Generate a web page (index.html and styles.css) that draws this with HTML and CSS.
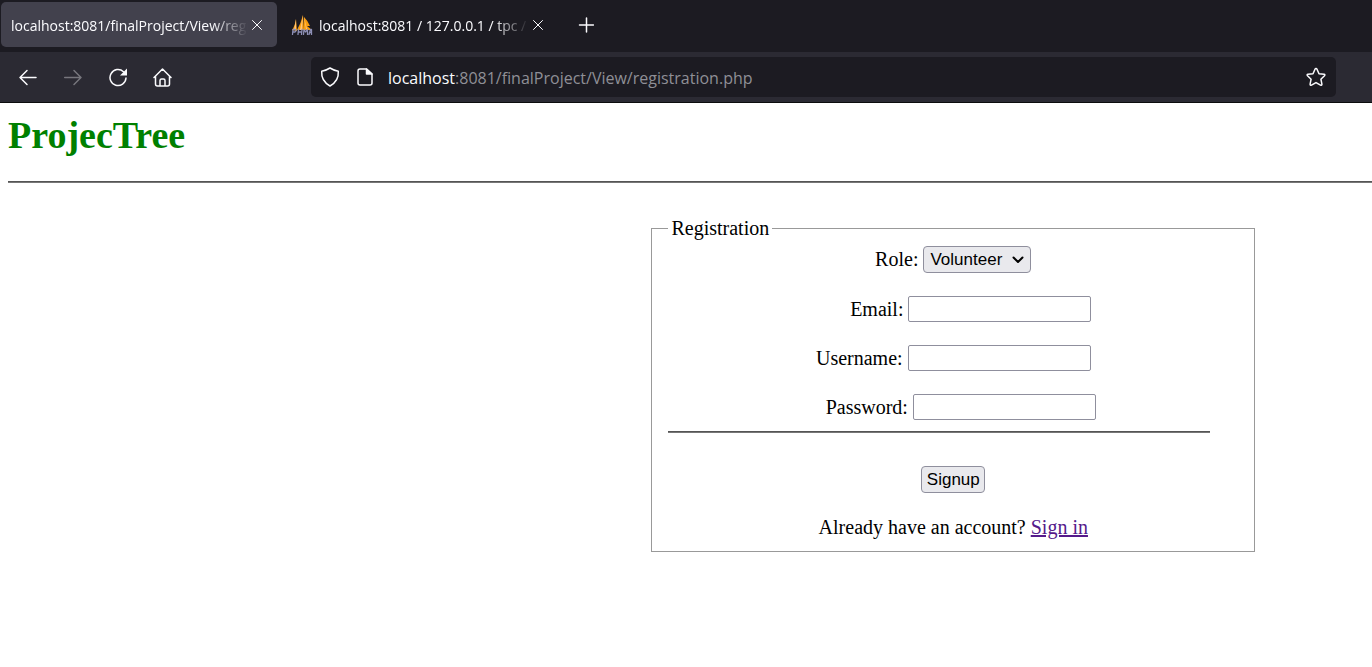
FILE: index.html
```html
<!DOCTYPE html>
<html lang="en">
<head>
<meta charset="utf-8">
<title>ProjecTree</title>
<link rel="stylesheet" href="styles.css">
</head>
<body>
<header class="browser">
  <div class="tabs">
    <div class="tab tab-active">
      <span class="tab-title">localhost:8081/finalProject/View/registration.php</span>
      <button class="icon-button tab-close" type="button" aria-label="Close tab"><svg width="10" height="10" viewBox="0 0 10 10"><path d="M.5.5l9 9m0-9l-9 9"/></svg></button>
    </div>
    <div class="tab">
      <svg class="favicon" width="22" height="20" viewBox="0 0 22 20">
        <path fill="#f89c0e" stroke="none" d="M1 15Q4 11 5 4l1 12zM6 15Q10 8 12 0l1 15zM13 15V2q4 4 6 9h-3l5 4z"/>
        <path fill="#ffc579" stroke="none" d="M5 4L3 15h2zM12 0L9 15h2zM13 2l2 12h1z"/>
        <path stroke="#8d8fb5" stroke-width="1.300" d="M1.500 19.500l.5-5h2.500q1 1.500-.5 2.500H2M7 19.500l.5-5m-.2 2.500h3.200m.5-2.500l-.5 5M12.500 19.500l.5-5 1.500 2.500 2-2.500v5M18 19.500l1.500-5h1v5m-2-2h2"/>
      </svg>
      <span class="tab-title">localhost:8081 / 127.0.0.1 / tpc / users</span>
      <button class="icon-button tab-close" type="button" aria-label="Close tab"><svg width="10" height="10" viewBox="0 0 10 10"><path d="M.5.5l9 9m0-9l-9 9"/></svg></button>
    </div>
    <button class="icon-button new-tab" type="button" aria-label="New tab"><svg width="16" height="16" viewBox="0 0 16 16"><path d="M8.500 1v14M1.500 8h14"/></svg></button>
  </div>
  <div class="toolbar">
    <nav class="nav">
      <button class="icon-button" type="button" aria-label="Back"><svg width="20" height="20" viewBox="0 0 20 20"><path d="M18 10.500H2m7-7l-7 7 7 7"/></svg></button>
      <button class="icon-button" type="button" aria-label="Forward" disabled><svg width="20" height="20" viewBox="0 0 20 20"><path d="M1.700 10.500H18m-7-7l7 7-7 7"/></svg></button>
      <button class="icon-button" type="button" aria-label="Reload"><svg width="20" height="20" viewBox="0 0 20 20"><path d="M15.500 4.700A8 8 0 1 0 18 11"/><path fill="currentColor" stroke="none" d="M19 1.500v7h-7z"/></svg></button>
      <button class="icon-button" type="button" aria-label="Home"><svg width="20" height="20" viewBox="0 0 20 20"><path d="M1 10.500L9.500 2l8.500 8.500M2.500 9.500V17q0 2 2 2h10q2 0 2-2V9.500M7 19v-5.500q0-1.500 1.500-1.500h2q1.500 0 1.500 1.500V19"/></svg></button>
    </nav>
    <div class="address">
      <button class="icon-button" type="button" aria-label="Tracking protection"><svg width="20" height="20" viewBox="0 0 20 20"><path d="M10 1q4 2.500 8.300 3.300Q19 14 10 19 1 14 1.700 4.300 6 3.500 10 1z"/></svg></button>
      <button class="icon-button" type="button" aria-label="Site information"><svg width="20" height="20" viewBox="0 0 20 20"><path d="M12.500 2H6Q4 2 4 4v12q0 2 2 2h10q2 0 2-2V7z"/><path fill="currentColor" d="M12.500 2v5H18z"/></svg></button>
      <div class="url" role="textbox" aria-label="Address"><span class="host">localhost</span>:8081/finalProject/View/registration.php</div>
      <button class="icon-button" type="button" aria-label="Bookmark"><svg width="20" height="20" viewBox="0 0 20 20"><path d="M10 1.500q.7 0 1 .7l2 4.500 5 .6q1.500.3.500 1.500l-3.600 3.400 1 5q0 1.500-1.400.9L10 15.600l-4.500 2.500q-1.400.6-1.400-.9l1-5L1.500 8.800q-1-1.200.5-1.500l5-.6 2-4.500q.3-.7 1-.7z"/></svg></button>
    </div>
  </div>
</header>
<main class="page">
  <h1 class="brand">ProjecTree</h1>
  <hr class="rule">
  <form>
    <fieldset class="registration">
      <legend>Registration</legend>
      <div class="row">
        <label for="role">Role:</label>
        <span class="select-wrap">
          <select class="control select" id="role"><option>Volunteer</option></select>
          <svg class="chevron" width="12" height="8" viewBox="0 0 12 8"><path d="M1.500 1.500L6 6l4.500-4.500"/></svg>
        </span>
      </div>
      <div class="row row-email"><label for="email">Email:</label><input class="control text" id="email" type="email"></div>
      <div class="row"><label for="username">Username:</label><input class="control text" id="username" type="text"></div>
      <div class="row row-password"><label for="password">Password:</label><input class="control text" id="password" type="password"></div>
      <hr class="rule form-rule">
      <div class="row"><button class="control signup" type="submit">Signup</button></div>
      <p class="row">Already have an account? <a class="signin" href="#signin">Sign in</a></p>
    </fieldset>
  </form>
</main>
</body>
</html>
```

FILE: styles.css
```css
* {
  box-sizing: border-box;
}

body {
  margin: 0;
  background: #fff;
  color: #000;
  font: 20px/23px "Liberation Serif", "Times New Roman", serif;
}

svg {
  display: block;
  fill: none;
  stroke: currentColor;
  stroke-width: 1.5;
  stroke-linecap: round;
  stroke-linejoin: round;
}

.browser {
  background: #2b2a33;
  border-bottom: 1px solid #0c0c0d;
  color: #fbfbfe;
  font-family: "Open Sans", "Noto Sans", sans-serif;
}

.tabs {
  display: flex;
  align-items: center;
  height: 52px;
  padding: 0 1px 3px;
  background: #1c1b22;
}

.tab {
  display: flex;
  align-items: center;
  width: 276px;
  height: 45px;
  padding: 0 15px 0 10px;
  border-radius: 5px;
  font-size: 14px;
}

.tab-active {
  background: #42414d;
}

.tab + .tab {
  width: 281px;
  padding-left: 14px;
}

.favicon {
  flex: none;
  margin-right: 6px;
}

.tab-title {
  flex: 1;
  padding-top: 2px;
  overflow: hidden;
  white-space: nowrap;
  mask-image: linear-gradient(to left, transparent, #000 36px);
}

.icon-button {
  flex: none;
  padding: 0;
  border: 0;
  background: none;
  color: inherit;
}

.icon-button:disabled {
  color: #77767d;
}

.tab-close {
  margin-left: 4px;
}

.tab-close svg {
  stroke-width: 1;
}

.new-tab {
  margin-left: 20px;
}

.toolbar {
  display: flex;
  align-items: center;
  height: 50px;
  padding: 0 36px 0 18px;
}

.nav {
  display: flex;
  flex: none;
  gap: 25px;
  width: 293px;
}

.address {
  display: flex;
  flex: 1;
  align-items: center;
  gap: 14px;
  height: 40px;
  padding: 0 10px 0 9px;
  border-radius: 5px;
  background: #1c1b22;
}

.url {
  flex: 1;
  padding-top: 2px;
  color: #8f8f96;
  font-size: 16px;
}

.host {
  color: #fbfbfe;
}

.page {
  padding: 10px 0 0 8px;
}

.brand {
  margin: 0;
  color: green;
  font-size: 38px;
  line-height: 44px;
}

.rule {
  height: 2px;
  margin: 24px 0 0;
  border: 0;
  border-top: 1px solid #555;
  background: #777;
}

.registration {
  width: 44vw;
  margin: 34px 0 0 46.9vw;
  padding: 6px 16px 12px;
  border: 1px solid #999;
}

.registration legend {
  padding: 0 3px;
}

.row {
  display: flex;
  align-items: center;
  justify-content: center;
  gap: 5px;
  margin: 0 0 23px;
}

.row-email {
  padding-left: 35px;
}

.row-password {
  margin-bottom: 0;
  padding-left: 15px;
}

.row:last-child {
  margin-bottom: 0;
}

.control {
  height: 27px;
  border: 1px solid #8f8f9d;
  border-radius: 4px;
  background: #e9e9ed;
  color: #000;
  font: 17px "Liberation Sans", Arial, sans-serif;
}

.text {
  width: 183px;
  height: 26px;
  border-radius: 2px;
  background: #fff;
}

.select-wrap {
  position: relative;
}

.select {
  display: block;
  width: 108px;
  padding: 0 6px;
  appearance: none;
}

.chevron {
  position: absolute;
  top: 10px;
  right: 7px;
  stroke-width: 2;
  pointer-events: none;
}

.form-rule {
  width: 95%;
  margin: 11px 0 33px;
}

.signup {
  width: 64px;
  padding: 0;
}

.signin {
  color: #551a8b;
}
```
